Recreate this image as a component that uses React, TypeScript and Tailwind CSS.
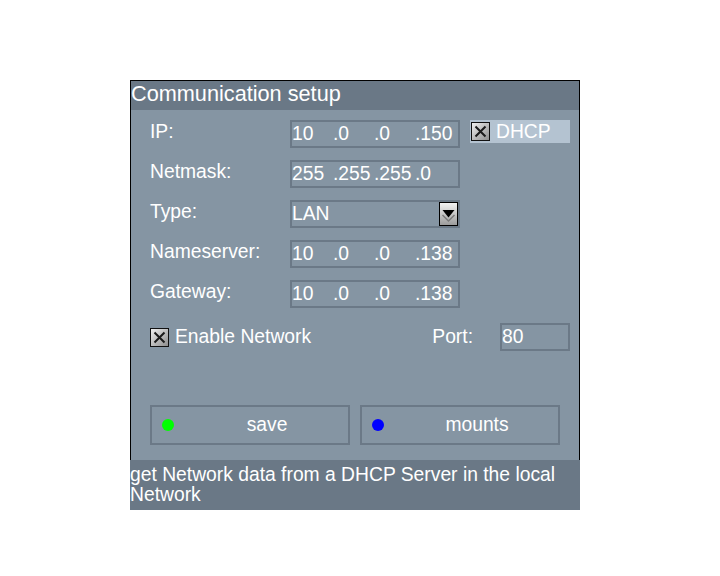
import React from "react";

function CheckBox({ id }: { id: string }) {
  return (
    <svg width="19" height="19" viewBox="0 0 19 19" className="block shrink-0">
      <defs>
        <linearGradient id={id} x1="0" y1="0" x2="1" y2="1">
          <stop offset="0" stopColor="#f2f2f2" />
          <stop offset="1" stopColor="#8a8a8a" />
        </linearGradient>
      </defs>
      <rect x="0.5" y="0.5" width="18" height="18" fill={`url(#${id})`} stroke="#111" />
      <path d="M4.5 4.5 L14.5 14.5 M14.5 4.5 L4.5 14.5" stroke="#1a1a1a" strokeWidth="2" />
    </svg>
  );
}

function DropButton() {
  return (
    <svg width="19" height="24" viewBox="0 0 19 24" className="block shrink-0">
      <defs>
        <linearGradient id="ddg" x1="0" y1="0" x2="0" y2="1">
          <stop offset="0" stopColor="#f4f4f4" />
          <stop offset="1" stopColor="#9a9a9a" />
        </linearGradient>
      </defs>
      <rect x="0.5" y="0.5" width="18" height="23" fill="url(#ddg)" stroke="#000" />
      <path d="M3.5 8 H15.5 L9.5 15.5 Z" fill="#000" />
      <path d="M3.5 13 L9.5 19 L15.5 13" stroke="#7a7a7a" strokeWidth="1.5" fill="none" />
    </svg>
  );
}

function IpField({ parts }: { parts: string[] }) {
  return (
    <div className="w-[170px] h-[28px] border-2 border-[#6b7987] flex text-[19.3px] leading-[24px] text-white whitespace-nowrap">
      {parts.map((p, i) => (
        <span key={i} className="w-[41px] shrink-0">
          {p}
        </span>
      ))}
    </div>
  );
}

function Row({ label, children }: { label: string; children: React.ReactNode }) {
  return (
    <div className="flex items-start h-[28px]">
      <div className="w-[140px] text-[19.3px] leading-[24px] text-white whitespace-nowrap">{label}</div>
      {children}
    </div>
  );
}

export default function App() {
  return (
    <div className="min-h-[576px] w-[720px] bg-white pt-[80px] pl-[130px] font-['Liberation_Sans',Arial,sans-serif]">
      <div className="w-[450px]">
        <div className="border-x border-t border-black bg-[#8595a3]">
          <div className="h-[29px] bg-[#6a7886] text-white text-[21.7px] leading-[25px] whitespace-nowrap">
            Communication setup
          </div>
          <div className="h-[350px] pl-[19px] pt-[10px] flex flex-col">
            <div className="flex flex-col gap-[12px]">
              <Row label="IP:">
                <IpField parts={["10", ".0", ".0", ".150"]} />
                <div className="ml-[10px] w-[100px] h-[23px] bg-[#b4c3d1] flex items-center">
                  <div className="ml-[1px]">
                    <CheckBox id="cb1" />
                  </div>
                  <span className="ml-[6px] text-[19.3px] leading-[23px] text-white">DHCP</span>
                </div>
              </Row>
              <Row label="Netmask:">
                <IpField parts={["255", ".255", ".255", ".0"]} />
              </Row>
              <Row label="Type:">
                <div className="w-[170px] h-[28px] border-2 border-[#6b7987] flex text-[19.3px] leading-[24px] text-white">
                  <span>LAN</span>
                  <div className="ml-auto">
                    <DropButton />
                  </div>
                </div>
              </Row>
              <Row label="Nameserver:">
                <IpField parts={["10", ".0", ".0", ".138"]} />
              </Row>
              <Row label="Gateway:">
                <IpField parts={["10", ".0", ".0", ".138"]} />
              </Row>
            </div>
            <div className="mt-[15px] w-[420px] h-[28px] flex items-center justify-between">
              <div className="flex items-center">
                <CheckBox id="cb2" />
                <span className="ml-[6px] text-[19.3px] leading-[24px] text-white whitespace-nowrap">Enable Network</span>
              </div>
              <div className="flex items-center">
                <span className="mr-[27px] text-[19.3px] leading-[24px] text-white">Port:</span>
                <div className="w-[70px] h-[28px] border-2 border-[#6b7987] text-[19.3px] leading-[24px] text-white">
                  80
                </div>
              </div>
            </div>
            <div className="mt-[54px] flex gap-[10px]">
              <div className="w-[200px] h-[40px] border-2 border-[#6b7987] flex items-center">
                <div className="ml-[10px] w-[12px] h-[12px] rounded-full bg-[#00ff00] shrink-0" />
                <span className="ml-[12px] flex-1 text-center text-[19.3px] leading-[24px] text-white">save</span>
              </div>
              <div className="w-[200px] h-[40px] border-2 border-[#6b7987] flex items-center">
                <div className="ml-[10px] w-[12px] h-[12px] rounded-full bg-[#0000ff] shrink-0" />
                <span className="ml-[12px] flex-1 text-center text-[19.3px] leading-[24px] text-white">mounts</span>
              </div>
            </div>
          </div>
        </div>
        <div className="h-[50px] bg-[#6a7886] pt-[5px] text-[19.3px] leading-[20px] text-white">
          get Network data from a DHCP Server in the local Network
        </div>
      </div>
    </div>
  );
}
